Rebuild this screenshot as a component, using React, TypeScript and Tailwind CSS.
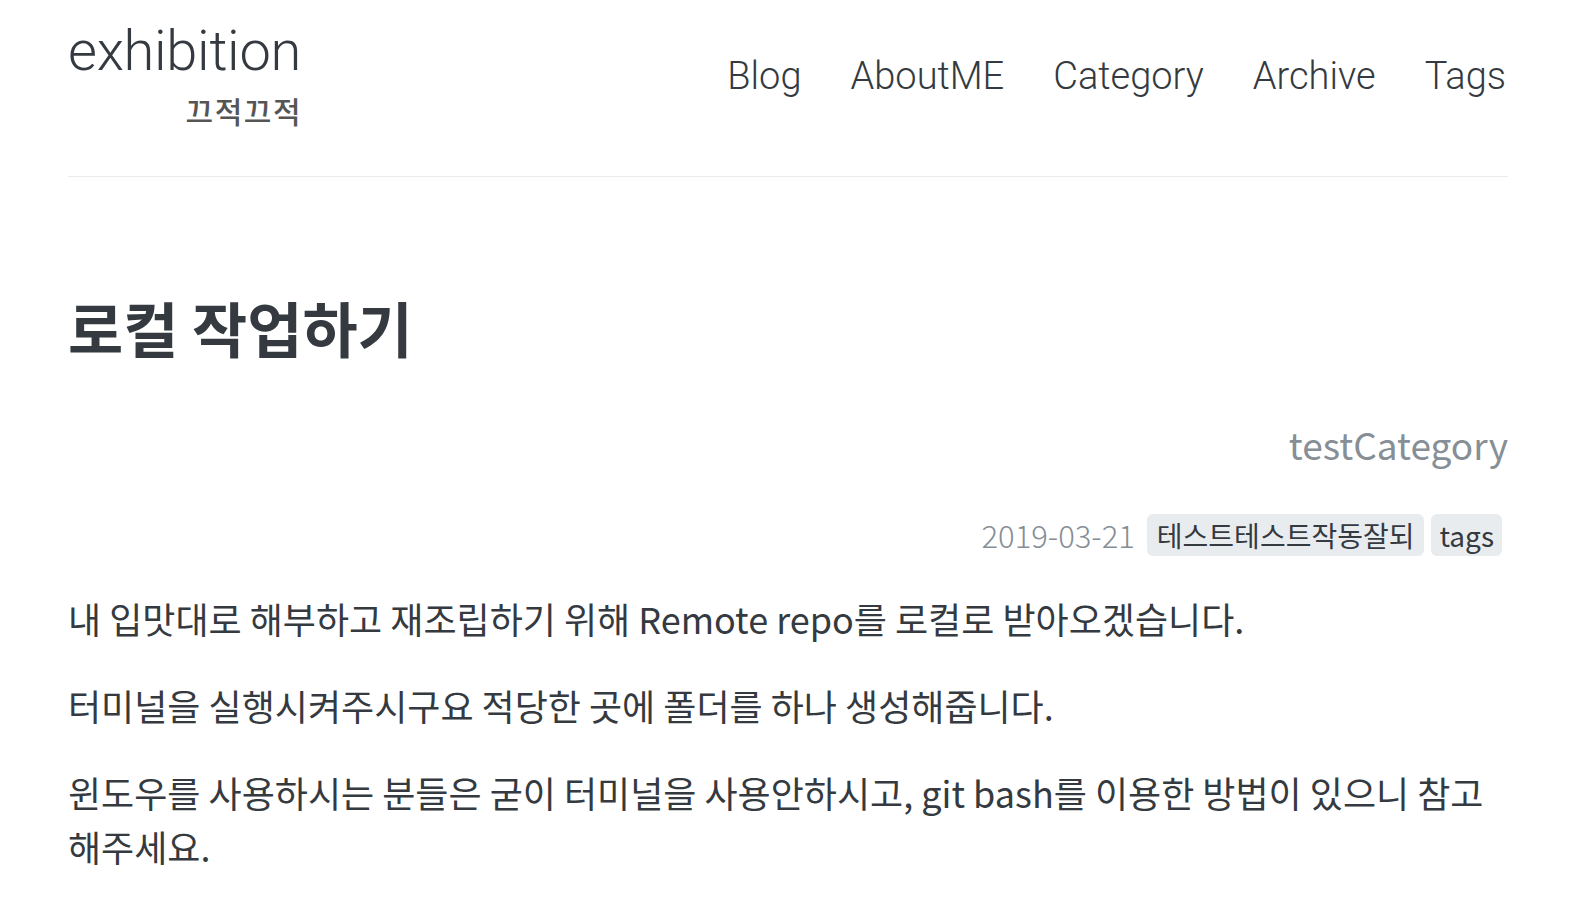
const kr = { fontFamily: '"Noto Sans CJK KR", "Noto Sans", sans-serif' };
const head = { fontFamily: 'Roboto, "Liberation Sans", sans-serif' };

const navLinks = ['Blog', 'AboutME', 'Category', 'Archive', 'Tags'];

const paragraphs = [
  '내 입맛대로 해부하고 재조립하기 위해 Remote repo를 로컬로 받아오겠습니다.',
  '터미널을 실행시켜주시구요 적당한 곳에 폴더를 하나 생성해줍니다.',
  '윈도우를 사용하시는 분들은 굳이 터미널을 사용안하시고, git bash를 이용한 방법이 있으니 참고 해주세요.',
];

const App = () => {
  return (
    <div className="min-h-screen bg-white">
      <div className="ml-[68px] w-[1440px]">
        <header className="flex items-start justify-between pt-[20px] pb-[47px] border-b border-[#e9ecef]">
          <a href="#" className="flex flex-col items-end text-[#343a40]">
            <span style={head} className="text-[56px] font-light leading-[62px] tracking-[-0.3px]">
              exhibition
            </span>
            <span style={kr} className="text-[30px] font-medium leading-[38px] tracking-[1.5px] text-[#555] mt-[9px] -mr-[1px]">
              끄적끄적
            </span>
          </a>
          <nav className="flex gap-[49px] pt-[32px] pr-[2px]">
            {navLinks.map((link) => (
              <a key={link} href="#" style={head} className="text-[38px] font-light leading-[48px] text-[#343a40]">
                {link}
              </a>
            ))}
          </nav>
        </header>

        <article style={kr} className="text-[#343a40]">
          <h1 className="text-[60px] font-bold leading-[80px] mt-[110px]">로컬 작업하기</h1>
          <div className="text-right text-[37px] leading-[50px] text-[#868e96] mt-[52px]">testCategory</div>
          <div className="flex justify-end items-center gap-[7px] mt-[45px] pr-[6px]">
            <span className="text-[31px] leading-[42px] font-light text-[#868e96] mr-[5px]">2019-03-21</span>
            <span className="h-[42px] flex items-center px-[10px] rounded-[6px] bg-[#e9ecef] text-[28px] leading-[42px]">
              테스트테스트작동잘되
            </span>
            <span className="h-[42px] flex items-center px-[8px] rounded-[6px] bg-[#e9ecef] text-[28px] leading-[42px]">
              tags
            </span>
          </div>
          <div className="mt-[35px]">
            {paragraphs.map((p) => (
              <p key={p} className="text-[36px] leading-[54px] mb-[33px]">
                {p}
              </p>
            ))}
          </div>
        </article>
      </div>
    </div>
  );
};

export default App;
